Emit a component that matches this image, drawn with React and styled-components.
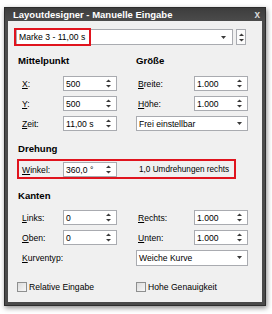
import React from "react";
import styled, { createGlobalStyle } from "styled-components";

const Global = createGlobalStyle`
  html, body { margin: 0; padding: 0; background: #ffffff; }
  body { font-family: "Liberation Sans", Arial, sans-serif; }
  * { box-sizing: border-box; }
`;

const Page = styled.div`
  width: 272px;
  height: 314px;
  padding: 7px 0 0 4px;
`;

const Window = styled.div`
  width: 262px;
  height: 299px;
  display: flex;
  flex-direction: column;
  background: linear-gradient(#3d3d3d, #4c4c4c 14px, #4a4a4a);
  border: 1px solid #2c2c2c;
  padding: 0 3px 3px;
  box-shadow: 1px 2px 5px rgba(0, 0, 0, 0.45);
`;

const TitleBar = styled.div`
  height: 13px;
  display: flex;
  align-items: center;
  justify-content: space-between;
  padding: 0 2px 0 5px;
  color: #ffffff;
  font-size: 9.5px;
  font-weight: bold;
`;

const Close = styled.span`
  color: #d8d8d8;
  font-size: 10px;
  font-weight: bold;
  line-height: 1;
`;

const Panel = styled.div`
  flex: 1;
  background: #f0f0f0;
  padding: 8px 0 0 8px;
  font-size: 8.6px;
  color: #000;
`;

const TopRow = styled.div`
  position: relative;
  display: flex;
  gap: 3px;
  height: 16px;
`;

const Box = styled.div`
  display: flex;
  align-items: center;
  width: ${(p) => p.$w}px;
  height: ${(p) => p.$h || 15}px;
  background: #ffffff;
  border: 1px solid #a9abb0;
  padding: 0 5px 0 2px;
  white-space: nowrap;
`;

const Spacer = styled.span`
  flex: 1;
`;

const SpinBox = styled.div`
  width: 10px;
  height: 16px;
  border: 1px solid #a9abb0;
  background: #fbfbfb;
  display: flex;
  align-items: center;
  justify-content: center;
`;

const Highlight = styled.div`
  position: absolute;
  left: ${(p) => p.$l}px;
  top: ${(p) => p.$t}px;
  width: ${(p) => p.$w}px;
  height: ${(p) => p.$h}px;
  border: 2px solid #e0141e;
  pointer-events: none;
`;

const Heading = styled.div`
  font-size: 9.6px;
  font-weight: bold;
  line-height: 12px;
  height: 12px;
  margin-top: ${(p) => p.$mt}px;
  margin-bottom: ${(p) => p.$mb}px;
  padding-left: 2px;
`;

const Grid = styled.div`
  position: relative;
  display: grid;
  grid-template-columns: 112px 112px;
  column-gap: 8px;
  row-gap: 5px;
  grid-auto-rows: 15px;
  margin-top: ${(p) => p.$mt || 0}px;
`;

const Headings = styled(Grid)`
  grid-auto-rows: 12px;
`;

const Field = styled.div`
  display: flex;
  align-items: center;
`;

const Label = styled.span`
  width: ${(p) => (p.$right ? 58 : 47)}px;
  padding-left: ${(p) => (p.$right ? 2 : 6)}px;
  white-space: nowrap;
  u { text-decoration: underline; text-underline-offset: 1px; }
`;

const Info = styled.span`
  padding-left: 3px;
  align-self: center;
  white-space: nowrap;
  font-size: 8.2px;
`;

const Checks = styled.div`
  display: grid;
  grid-template-columns: 119px 112px;
  margin-top: 16px;
  padding-left: 1px;
`;

const Check = styled.label`
  display: flex;
  align-items: center;
  gap: 2px;
  height: 12px;
`;

const CheckBoxSq = styled.span`
  width: 10px;
  height: 10px;
  border: 1px solid #8e8f8f;
  background: linear-gradient(135deg, #dcdcdc, #f7f7f7);
`;

const Spin = () => (
  <svg width="5" height="9" viewBox="0 0 5 9">
    <path d="M2.5 0.5 L5 3 L0 3 Z" fill="#3a3a3a" />
    <path d="M0 6 L5 6 L2.5 8.5 Z" fill="#3a3a3a" />
  </svg>
);

const Arrow = () => (
  <svg width="5" height="3" viewBox="0 0 5 3">
    <path d="M0 0 L5 0 L2.5 3 Z" fill="#3a3a3a" />
  </svg>
);

const Input = ({ value }) => (
  <Box $w={54}>
    {value}
    <Spacer />
    <Spin />
  </Box>
);

const Select = ({ value, w, h }) => (
  <Box $w={w} $h={h}>
    {value}
    <Spacer />
    <Arrow />
  </Box>
);

const L = ({ k, rest, right }) => (
  <Label $right={right}>
    <u>{k}</u>
    {rest}
  </Label>
);

export default function App() {
  return (
    <Page>
      <Global />
      <Window>
        <TitleBar>
          <span>Layoutdesigner - Manuelle Eingabe</span>
          <Close>x</Close>
        </TitleBar>
        <Panel>
          <TopRow>
            <Box $w={217} $h={16} style={{ paddingRight: 6 }}>
              Marke 3 - 11,00 s
              <Spacer />
              <Arrow />
            </Box>
            <SpinBox>
              <Spin />
            </SpinBox>
            <Highlight $l={-2} $t={-1} $w={77} $h={18} />
          </TopRow>

          <Headings $mt={10}>
            <Heading>Mittelpunkt</Heading>
            <Heading style={{ paddingLeft: 0 }}>Größe</Heading>
          </Headings>
          <Grid $mt={9}>
            <Field>
              <L k="X" rest=":" />
              <Input value="500" />
            </Field>
            <Field>
              <L k="B" rest="reite:" right />
              <Input value="1.000" />
            </Field>
            <Field>
              <L k="Y" rest=":" />
              <Input value="500" />
            </Field>
            <Field>
              <L k="H" rest="öhe:" right />
              <Input value="1.000" />
            </Field>
            <Field>
              <L k="Z" rest="eit:" />
              <Input value="11,00 s" />
            </Field>
            <Field>
              <Select value="Frei einstellbar" w={112} />
            </Field>
          </Grid>

          <Heading $mt={12} $mb={7}>
            Drehung
          </Heading>
          <Grid>
            <Field>
              <L k="W" rest="inkel:" />
              <Input value="360,0 °" />
            </Field>
            <Info>1,0 Umdrehungen rechts</Info>
            <Highlight $l={1} $t={-3} $w={219} $h={20} />
          </Grid>

          <Heading $mt={13} $mb={8}>
            Kanten
          </Heading>
          <Grid>
            <Field>
              <L k="L" rest="inks:" />
              <Input value="0" />
            </Field>
            <Field>
              <L k="R" rest="echts:" right />
              <Input value="1.000" />
            </Field>
            <Field>
              <L k="O" rest="ben:" />
              <Input value="0" />
            </Field>
            <Field>
              <L k="U" rest="nten:" right />
              <Input value="1.000" />
            </Field>
            <Field>
              <L k="K" rest="urventyp:" />
            </Field>
            <Field>
              <Select value="Weiche Kurve" w={112} h={16} />
            </Field>
          </Grid>

          <Checks>
            <Check>
              <CheckBoxSq />
              Relative Eingabe
            </Check>
            <Check>
              <CheckBoxSq />
              Hohe Genauigkeit
            </Check>
          </Checks>
        </Panel>
      </Window>
    </Page>
  );
}
